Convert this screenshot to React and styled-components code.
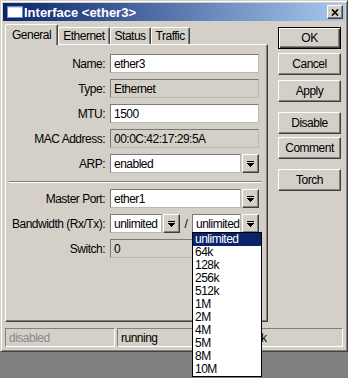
import React from "react";
import styled, { createGlobalStyle } from "styled-components";

const Global = createGlobalStyle`
  html, body { margin: 0; padding: 0; background: #808080; }
  html, body, #root { min-height: 378px; }
  body { font-family: "Liberation Sans", Arial, sans-serif; font-size: 12px; letter-spacing: -0.5px; color: #000; }
`;

const Window = styled.div`
  position: relative;
  width: 348px;
  height: 352px;
  box-sizing: border-box;
  background: #d4d0c8;
  border: 1px solid;
  border-color: #d4d0c8 #404040 #404040 #d4d0c8;
  box-shadow: inset 1px 1px #fff, inset -1px -1px #808080;
  padding: 2px;
  display: flex;
  flex-direction: column;
`;

const TitleBar = styled.div`
  height: 18px;
  display: flex;
  align-items: center;
  padding: 0 2px 0 4px;
  background: linear-gradient(to right, #0a246a, #a6caf0);
`;

const TitleText = styled.div`
  flex: 1;
  margin-left: 1px;
  color: #fff;
  font-weight: bold;
  font-size: 13px;
  letter-spacing: 0;
  white-space: nowrap;
`;

const CloseButton = styled.div`
  width: 16px;
  height: 14px;
  box-sizing: border-box;
  background: #d4d0c8;
  border: 1px solid;
  border-color: #fff #404040 #404040 #fff;
  box-shadow: inset -1px -1px #808080;
  display: flex;
  align-items: center;
  justify-content: center;
`;

const Body = styled.div`
  display: flex;
  margin-top: 3px;
  padding-left: 2px;
`;

const TabArea = styled.div`
  width: 263px;
  display: flex;
  flex-direction: column;
`;

const TabStrip = styled.div`
  height: 20px;
  display: flex;
  align-items: flex-end;
`;

const Tab = styled.div`
  position: relative;
  z-index: ${(p) => (p.$active ? 2 : 1)};
  box-sizing: border-box;
  height: ${(p) => (p.$active ? 21 : 17)}px;
  margin-bottom: ${(p) => (p.$active ? -1 : 0)}px;
  padding: 0 ${(p) => (p.$active ? 6 : 4)}px;
  display: flex;
  align-items: center;
  background: #d4d0c8;
  border-style: solid;
  border-width: 1px 1px 0 1px;
  border-color: #fff #404040 transparent #fff;
  border-radius: 2px 2px 0 0;
  box-shadow: inset -1px 0 #808080;
  white-space: nowrap;
`;

const TabPanel = styled.div`
  position: relative;
  z-index: 1;
  box-sizing: border-box;
  height: 278px;
  border: 1px solid;
  border-color: #fff #404040 #404040 #fff;
  box-shadow: inset -1px -1px #808080;
  padding: 9px 8px 0 6px;
  display: flex;
  flex-direction: column;
  gap: 6px;
`;

const FieldRow = styled.div`
  height: 19px;
  display: flex;
  align-items: center;
`;

const Label = styled.div`
  flex: 1;
  min-width: 0;
  display: flex;
  justify-content: flex-end;
  white-space: nowrap;
  margin-right: 5px;
`;

const Field = styled.div`
  width: 149px;
  height: 19px;
  display: flex;
  align-items: center;
  gap: 1px;
`;

const TextBox = styled.div`
  box-sizing: border-box;
  height: 19px;
  ${(p) => (p.$width ? `width: ${p.$width}px; flex: none;` : "flex: 1;")}
  border: 1px solid;
  border-color: #7a7a7a #b8b8b8 #b8b8b8 #7a7a7a;
  background: ${(p) => (p.$readOnly ? "#d4d0c8" : "#fff")};
  padding-left: 3px;
  display: flex;
  align-items: center;
  white-space: nowrap;
  overflow: hidden;
`;

const DropButton = styled.div`
  flex: none;
  box-sizing: border-box;
  width: 17px;
  height: 19px;
  background: #d4d0c8;
  border: 1px solid;
  border-color: #fff #404040 #404040 #fff;
  box-shadow: inset -1px -1px #808080;
  display: flex;
  align-items: center;
  justify-content: center;
`;

const Slash = styled.div`
  width: 10px;
  flex: none;
  text-align: center;
`;

const SelectWrap = styled.div`
  position: relative;
  flex: 1;
  display: flex;
  gap: 1px;
  height: 19px;
`;

const DropList = styled.div`
  position: absolute;
  z-index: 10;
  top: 18px;
  left: 0;
  width: 70px;
  box-sizing: border-box;
  background: #fff;
  border: 1px solid #000;
`;

const DropItem = styled.div`
  height: 13px;
  line-height: 13px;
  padding-left: 2px;
  background: ${(p) => (p.$selected ? "#0a246a" : "#fff")};
  color: ${(p) => (p.$selected ? "#fff" : "#000")};
  white-space: nowrap;
`;

const Separator = styled.div`
  height: 0;
  border-top: 1px solid #808080;
  border-bottom: 1px solid #fff;
  margin: 2px -3px 0 -3px;
`;

const ButtonColumn = styled.div`
  width: 63px;
  margin-left: 10px;
  padding-top: 3px;
  display: flex;
  flex-direction: column;
`;

const Button = styled.div`
  box-sizing: border-box;
  height: 22px;
  margin-top: ${(p) => p.$space || 0}px;
  background: #d4d0c8;
  border: 1px solid;
  border-color: ${(p) => (p.$default ? "#000" : "#fff #404040 #404040 #fff")};
  box-shadow: ${(p) =>
    p.$default
      ? "inset 1px 1px #fff, inset -1px -1px #404040, inset -2px -2px #808080"
      : "inset -1px -1px #808080"};
  display: flex;
  align-items: center;
  justify-content: center;
`;

const StatusBar = styled.div`
  display: flex;
  gap: 2px;
  margin-top: 6px;
  padding: 0 2px;
  height: 19px;
`;

const StatusCell = styled.div`
  box-sizing: border-box;
  ${(p) => (p.$width ? `width: ${p.$width}px;` : "flex: 1;")}
  height: 19px;
  border: 1px solid;
  border-color: #808080 #fff #fff #808080;
  padding-left: 3px;
  display: flex;
  align-items: center;
  color: ${(p) => (p.$dim ? "#8a8a8a" : "#000")};
  white-space: nowrap;
  overflow: hidden;
`;

const WindowIcon = () => (
  <svg width="16" height="12" viewBox="0 0 16 12" shapeRendering="crispEdges">
    <rect x="0" y="0" width="16" height="12" fill="#6f8fc8" />
    <rect x="1" y="1" width="14" height="10" fill="#fff" />
    <rect x="1" y="1" width="14" height="1" fill="#c8d8f0" />
  </svg>
);

const CloseIcon = () => (
  <svg width="8" height="7" viewBox="0 0 8 7">
    <path d="M1 0.5 L7 6.5 M7 0.5 L1 6.5" stroke="#000" strokeWidth="1.7" />
  </svg>
);

const ArrowIcon = () => (
  <svg width="7" height="6" viewBox="0 0 7 6" shapeRendering="crispEdges">
    <rect x="0" y="0" width="7" height="1" fill="#000" />
    <rect x="0" y="2" width="7" height="1" fill="#000" />
    <rect x="1" y="3" width="5" height="1" fill="#000" />
    <rect x="2" y="4" width="3" height="1" fill="#000" />
    <rect x="3" y="5" width="1" height="1" fill="#000" />
  </svg>
);

const bandwidths = ["unlimited", "64k", "128k", "256k", "512k", "1M", "2M", "4M", "5M", "8M", "10M"];

export default function App() {
  return (
    <>
      <Global />
      <Window>
        <TitleBar>
          <WindowIcon />
          <TitleText>Interface &lt;ether3&gt;</TitleText>
          <CloseButton>
            <CloseIcon />
          </CloseButton>
        </TitleBar>
        <Body>
          <TabArea>
            <TabStrip>
              <Tab $active>General</Tab>
              <Tab>Ethernet</Tab>
              <Tab>Status</Tab>
              <Tab>Traffic</Tab>
            </TabStrip>
            <TabPanel>
              <FieldRow>
                <Label>Name:</Label>
                <Field>
                  <TextBox>ether3</TextBox>
                </Field>
              </FieldRow>
              <FieldRow>
                <Label>Type:</Label>
                <Field>
                  <TextBox $readOnly>Ethernet</TextBox>
                </Field>
              </FieldRow>
              <FieldRow>
                <Label>MTU:</Label>
                <Field>
                  <TextBox>1500</TextBox>
                </Field>
              </FieldRow>
              <FieldRow>
                <Label>MAC Address:</Label>
                <Field>
                  <TextBox $readOnly>00:0C:42:17:29:5A</TextBox>
                </Field>
              </FieldRow>
              <FieldRow>
                <Label>ARP:</Label>
                <Field>
                  <TextBox>enabled</TextBox>
                  <DropButton>
                    <ArrowIcon />
                  </DropButton>
                </Field>
              </FieldRow>
              <Separator />
              <FieldRow>
                <Label>Master Port:</Label>
                <Field>
                  <TextBox>ether1</TextBox>
                  <DropButton>
                    <ArrowIcon />
                  </DropButton>
                </Field>
              </FieldRow>
              <FieldRow>
                <Label>Bandwidth (Rx/Tx):</Label>
                <Field>
                  <TextBox $width={52}>unlimited</TextBox>
                  <DropButton>
                    <ArrowIcon />
                  </DropButton>
                  <Slash>/</Slash>
                  <SelectWrap>
                    <TextBox>unlimited</TextBox>
                    <DropButton>
                      <ArrowIcon />
                    </DropButton>
                    <DropList>
                      {bandwidths.map((b, i) => (
                        <DropItem key={b} $selected={i === 0}>
                          {b}
                        </DropItem>
                      ))}
                    </DropList>
                  </SelectWrap>
                </Field>
              </FieldRow>
              <FieldRow>
                <Label>Switch:</Label>
                <Field>
                  <TextBox $readOnly>0</TextBox>
                </Field>
              </FieldRow>
            </TabPanel>
          </TabArea>
          <ButtonColumn>
            <Button $default>OK</Button>
            <Button $space={4}>Cancel</Button>
            <Button $space={5}>Apply</Button>
            <Button $space={10}>Disable</Button>
            <Button $space={3}>Comment</Button>
            <Button $space={10}>Torch</Button>
          </ButtonColumn>
        </Body>
        <StatusBar>
          <StatusCell $width={110} $dim>disabled</StatusCell>
          <StatusCell $width={113}>running</StatusCell>
          <StatusCell>link ok</StatusCell>
        </StatusBar>
      </Window>
    </>
  );
}
